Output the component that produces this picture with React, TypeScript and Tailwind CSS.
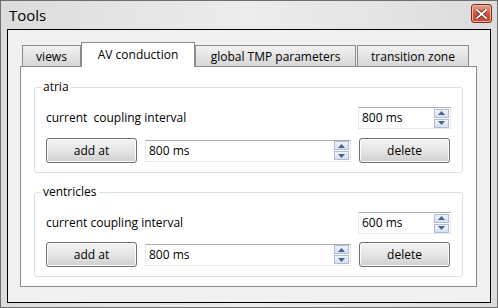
import type { ReactNode } from "react";

const FONT = "font-['Open_Sans',sans-serif]";

const TABS = [
  { label: "views", width: "w-[59px]" },
  { label: "AV conduction", width: "w-[114px]", active: true },
  { label: "global TMP parameters", width: "w-[161px]" },
  { label: "transition zone", width: "w-[112px]" },
];

function SpinArrows() {
  return (
    <div className="flex flex-col gap-px py-px pr-px">
      <span className="flex h-[9px] w-[15px] items-center justify-center border border-[#aebdd2] bg-gradient-to-b from-[#eef3fa] to-[#d4dff0]">
        <svg width="7" height="4" viewBox="0 0 7 4">
          <path d="M0 4 L3.5 0 L7 4 Z" fill="#4a5f94" />
        </svg>
      </span>
      <span className="flex h-[9px] w-[15px] items-center justify-center border border-[#aebdd2] bg-gradient-to-b from-[#eef3fa] to-[#d4dff0]">
        <svg width="7" height="4" viewBox="0 0 7 4">
          <path d="M0 0 L7 0 L3.5 4 Z" fill="#4a5f94" />
        </svg>
      </span>
    </div>
  );
}

function SpinBox({ value, className }: { value: string; className: string }) {
  return (
    <div
      className={`flex h-[22px] items-center justify-between border border-[#e3e9ef] border-t-[#abadb3] bg-white pl-[3px] ${className}`}
    >
      <span className="text-[12px] text-black">{value}</span>
      <SpinArrows />
    </div>
  );
}

function PushButton({ children }: { children: ReactNode }) {
  return (
    <button className="h-[25px] w-[91px] rounded-[3px] border border-[#707070] bg-gradient-to-b from-[#f2f2f2] via-[#e6e6e6] to-[#cfcfcf] text-[12px] text-black shadow-[inset_0_0_0_1px_#fcfcfc]">
      {children}
    </button>
  );
}

function Group({
  title,
  value,
  label,
  gap,
  className,
}: {
  title: string;
  value: string;
  label: string;
  gap: string;
  className?: string;
}) {
  return (
    <fieldset
      className={`rounded-[3px] border border-[#d5dfe5] pb-[9px] pl-[11px] pr-[12px] ${className ?? ""}`}
    >
      <legend className="-ml-[5px] px-[2px] text-[12px] leading-[16px] text-black">{title}</legend>
      <div className="mt-[12px] flex items-center justify-between">
        <span className="whitespace-pre text-[12px] text-black">{label}</span>
        <SpinBox value={value} className="mr-[-1px] w-[93px]" />
      </div>
      <div className={`flex items-center gap-[8px] ${gap}`}>
        <PushButton>add at</PushButton>
        <SpinBox value="800 ms" className="w-[206px]" />
        <PushButton>delete</PushButton>
      </div>
    </fieldset>
  );
}

export default function App() {
  return (
    <div
      className={`flex h-[308px] w-[498px] flex-col border border-[#6e6e6e] bg-gradient-to-r from-[#dcdcdc] via-[#ececec] to-[#dcdcdc] ${FONT}`}
    >
      <div className="flex h-[28px] shrink-0 items-center justify-between pl-[8px] pr-[5px]">
        <span className="text-[15px] leading-none text-black">Tools</span>
        <button className="mb-[3px] flex h-[19px] w-[21px] items-center justify-center rounded-[3px] border border-[#7a2a1f] bg-gradient-to-b from-[#e8a493] via-[#d0573f] to-[#c4422c] shadow-[inset_0_0_0_1px_#f0b7a8]">
          <svg width="11" height="10" viewBox="0 0 11 10">
            <path
              d="M1 1 L10 9 M10 1 L1 9"
              stroke="#5b2a22"
              strokeWidth="3.4"
              strokeLinecap="square"
            />
            <path
              d="M1 1 L10 9 M10 1 L1 9"
              stroke="#ffffff"
              strokeWidth="1.8"
              strokeLinecap="square"
            />
          </svg>
        </button>
      </div>
      <div className="mx-[6px] mb-[4px] flex-1 border border-black bg-[#f0f0f0] pl-[12px] pr-[13px] pt-[12px]">
        <div className="flex h-[24px] items-end pl-[2px]">
          {TABS.map((tab) =>
            tab.active ? (
              <div
                key={tab.label}
                className={`relative z-10 -mb-px -ml-px flex h-[25px] ${tab.width} items-start justify-center border border-b-0 border-[#898c95] bg-white pt-[3px] text-[12px] text-black`}
              >
                {tab.label}
              </div>
            ) : (
              <div
                key={tab.label}
                className={`mr-px flex h-[21px] ${tab.width} items-center justify-center border border-b-0 border-[#898c95] bg-gradient-to-b from-[#f2f2f2] to-[#d6d6d6] pt-px text-[12px] text-black`}
              >
                {tab.label}
              </div>
            ),
          )}
        </div>
        <div className="h-[221px] border border-[#898c95] bg-white px-[13px] pt-[12px]">
          <Group
            title="atria"
            value="800 ms"
            label="current  coupling interval"
            gap="mt-[9px]"
          />
          <Group
            title="ventricles"
            value="600 ms"
            label="current coupling interval"
            gap="mt-[8px]"
            className="mt-[11px]"
          />
        </div>
      </div>
    </div>
  );
}
